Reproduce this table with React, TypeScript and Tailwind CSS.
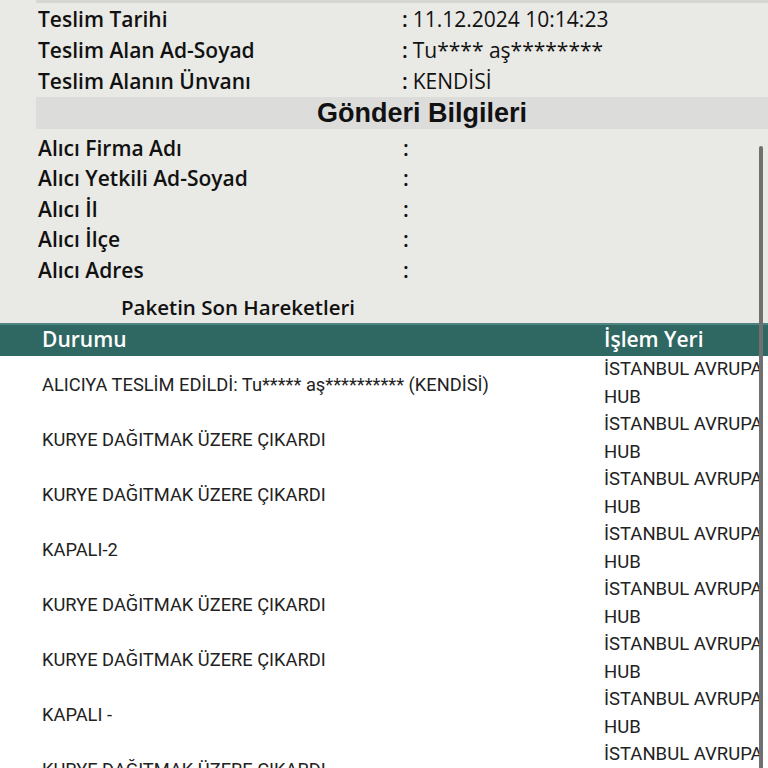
import React from "react";

const teslim = [
  { label: "Teslim Tarihi", value: "11.12.2024 10:14:23" },
  { label: "Teslim Alan Ad-Soyad", value: "Tu**** aş********" },
  { label: "Teslim Alanın Ünvanı", value: "KENDİSİ" },
];

const alici = ["Alıcı Firma Adı", "Alıcı Yetkili Ad-Soyad", "Alıcı İl", "Alıcı İlçe", "Alıcı Adres"];

const hareketler = [
  "ALICIYA TESLİM EDİLDİ: Tu***** aş********** (KENDİSİ)",
  "KURYE DAĞITMAK ÜZERE ÇIKARDI",
  "KURYE DAĞITMAK ÜZERE ÇIKARDI",
  "KAPALI-2",
  "KURYE DAĞITMAK ÜZERE ÇIKARDI",
  "KURYE DAĞITMAK ÜZERE ÇIKARDI",
  "KAPALI -",
  "KURYE DAĞITMAK ÜZERE ÇIKARDI",
];

export default function App() {
  return (
    <div className="relative h-[768px] w-[768px] overflow-hidden bg-white font-['Open_Sans','Noto_Sans',sans-serif] text-[#111]">
      {/* Üst bilgi alanı */}
      <div className="bg-[#e9e9e5] pl-[36px]">
        <div className="border-t-[3px] border-[#d6d6d2] pt-[1px]">
          {teslim.map((row) => (
            <div key={row.label} className="flex h-[31px] items-center pl-[2px] text-[21px]">
              <span className="w-[364px] font-semibold">{row.label}</span>
              <span className="font-semibold">:</span>
              <span className="ml-[5px] text-[21px]">{row.value}</span>
            </div>
          ))}
        </div>

        <div className="flex h-[32px] items-center justify-center bg-[#dcdcdb] pl-[40px] font-['Liberation_Sans',Arial,sans-serif] text-[27px] font-bold">
          Gönderi Bilgileri
        </div>

        <div className="pt-[4px]">
          {alici.map((label) => (
            <div key={label} className="flex h-[30.5px] items-center pl-[2px] text-[21px] font-semibold">
              <span className="w-[365px]">{label}</span>
              <span>:</span>
            </div>
          ))}
        </div>

        <div className="flex h-[37px] items-center pl-[85px] pt-[7px] text-[20.5px] font-semibold">
          Paketin Son Hareketleri
        </div>
      </div>

      {/* Hareket tablosu */}
      <div className="flex h-[33px] items-center border-t-2 border-[#4f8580] bg-[#2f6763] text-[21px] font-semibold text-white">
        <span className="w-[604px] pl-[42px]">Durumu</span>
        <span>İşlem Yeri</span>
      </div>

      {hareketler.map((durum, i) => (
        <div key={i} className="flex h-[55px] items-center whitespace-nowrap font-['Roboto',sans-serif] text-[18.3px] text-[#222]">
          <span className="w-[604px] pl-[42px] pt-[3px]">{durum}</span>
          <div className="flex flex-col pt-[1px] text-[18.5px] leading-[27.5px]">
            <span>İSTANBUL AVRUPA</span>
            <span>HUB</span>
          </div>
        </div>
      ))}

      {/* kaydırma çubuğu */}
      <div className="absolute bottom-0 right-[5px] top-[146px] w-[4px] rounded-t-full bg-[#707070]" />
    </div>
  );
}
